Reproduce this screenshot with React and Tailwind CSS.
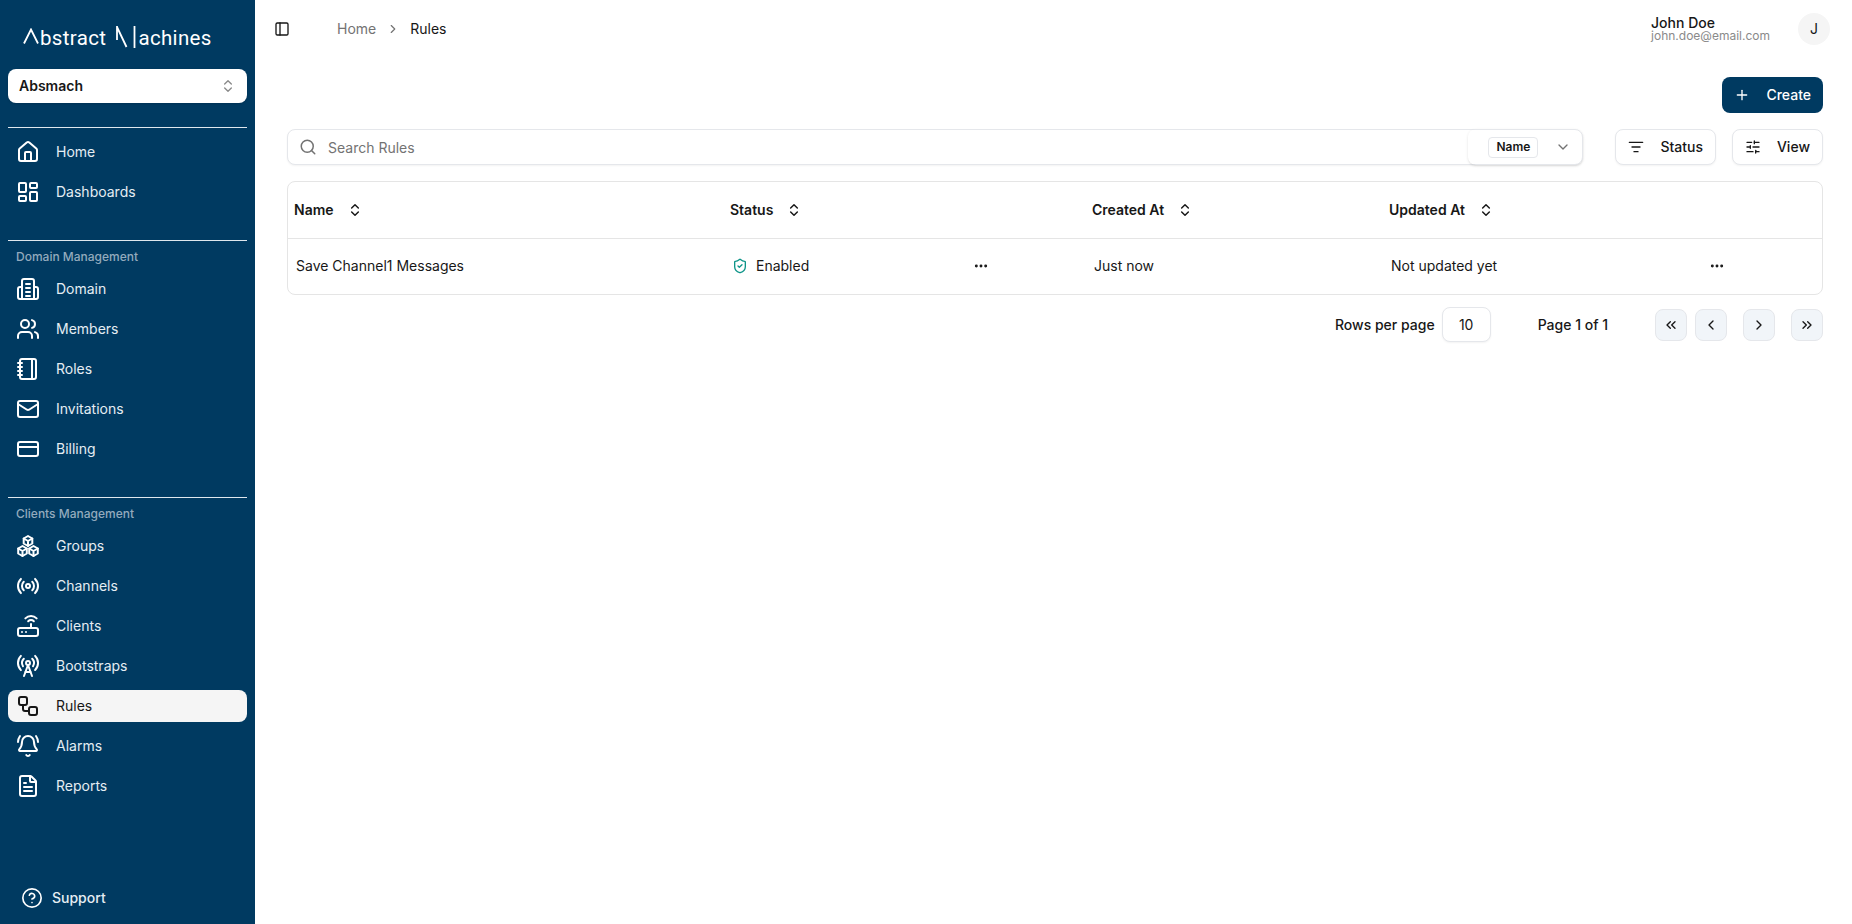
import React from 'react';
import {
  House,
  LayoutDashboard,
  Users,
  Notebook,
  Mail,
  CreditCard,
  Radio,
  Router,
  RadioTower,
  Workflow,
  BellRing,
  FileText,
  CircleHelp,
  ChevronsUpDown,
  ChevronDown,
  ChevronRight,
  ChevronLeft,
  ChevronsLeft,
  ChevronsRight,
  PanelLeft,
  Search,
  Plus,
  SlidersHorizontal,
  ListFilter,
  ShieldCheck,
  Ellipsis,
} from 'lucide-react';

// building with side wings, lucide has nothing close
const DomainIcon = (props) => (
  <svg {...props} viewBox="0 0 24 24" fill="none" stroke="currentColor" strokeWidth="2" strokeLinecap="round" strokeLinejoin="round">
    <path d="M6 22V4a2 2 0 0 1 2-2h8a2 2 0 0 1 2 2v18" />
    <path d="M6 10H4a2 2 0 0 0-2 2v8a2 2 0 0 0 2 2h16a2 2 0 0 0 2-2v-8a2 2 0 0 0-2-2h-2" />
    <path d="M10 7h4M10 11h4M10 15h4M10 19h4" />
  </svg>
);

// three stacked cubes
const cubes = [
  [12, 7],
  [6.5, 17],
  [17.5, 17],
];

const GroupsIcon = (props) => (
  <svg {...props} viewBox="0 0 24 24" fill="none" stroke="currentColor" strokeWidth="2" strokeLinecap="round" strokeLinejoin="round">
    {cubes.map(([x, y]) => (
      <g key={`${x}-${y}`}>
        <path d={`M${x} ${y - 5}l4.3 2.5v5L${x} ${y + 5}l-4.3-2.5v-5z`} />
        <path d={`M${x - 4.3} ${y - 2.5}L${x} ${y}l4.3-2.5M${x} ${y}v5`} />
      </g>
    ))}
  </svg>
);

const Logo = () => (
  <div className="flex items-end h-[24px] pl-[23px] text-white text-[20.5px] leading-[24px] tracking-[0.35px] font-['Roboto',sans-serif]">
    <svg width="16" height="16" viewBox="0 0 16 16" fill="none" stroke="white" strokeWidth="1.8" className="mb-[5px] -translate-y-[1px]">
      <path d="M1 15.5 L8 1.5 L15 15.5" />
    </svg>
    <span className="ml-[1px]">bstract</span>
    <svg width="20" height="22" viewBox="0 0 20 22" fill="none" stroke="white" strokeWidth="1.8" className="ml-[10px] mb-[2px]">
      <path d="M1 0 V14 M1 1 L10.5 21 M18.5 0 V22" />
    </svg>
    <span className="ml-[2px]">achines</span>
  </div>
);

const domainItems = [
  { label: 'Domain', icon: DomainIcon },
  { label: 'Members', icon: Users },
  { label: 'Roles', icon: Notebook },
  { label: 'Invitations', icon: Mail },
  { label: 'Billing', icon: CreditCard },
];

const clientItems = [
  { label: 'Groups', icon: GroupsIcon },
  { label: 'Channels', icon: Radio },
  { label: 'Clients', icon: Router },
  { label: 'Bootstraps', icon: RadioTower },
  { label: 'Rules', icon: Workflow, active: true },
  { label: 'Alarms', icon: BellRing },
  { label: 'Reports', icon: FileText },
];

const NavItem = ({ label, icon: Icon, active }) => (
  <div className={active ? 'flex items-center h-[32px] px-2 gap-4 rounded-lg bg-[#f5f5f5] text-[#171717] text-sm' : 'flex items-center h-[32px] px-2 gap-4 rounded-lg text-[#e5edf3] text-sm'}>
    <Icon className={active ? 'w-[24px] h-[24px] text-[#171717]' : 'w-[24px] h-[24px] text-white'} />
    <span>{label}</span>
  </div>
);

const SortHead = ({ label }) => (
  <div className="flex items-center gap-[13px] font-semibold text-sm text-[#171717]">
    <span>{label}</span>
    <ChevronsUpDown className="w-[16px] h-[16px]" strokeWidth={2.2} />
  </div>
);

const PageButton = ({ icon: Icon }) => (
  <button className="flex items-center justify-center w-[32px] h-[32px] rounded-lg border border-[#e5e7eb] bg-[#f1f5f9] text-[#171717]">
    <Icon className="w-[16px] h-[16px]" />
  </button>
);

const Sidebar = () => (
  <aside className="flex flex-col w-[255px] h-full shrink-0 bg-[#003a61] px-[8px]">
    <div className="-mx-[8px] pt-[26px]">
      <Logo />
    </div>
    <button className="flex items-center justify-between h-[34px] mt-[19px] pl-[11px] pr-[11px] rounded-lg bg-white shadow-sm text-sm font-semibold text-[#171717]">
      <span>Absmach</span>
      <ChevronsUpDown className="w-[16px] h-[16px] text-[#8a8a8a]" />
    </button>
    <div className="h-px mt-[24px] bg-[#dfe7ee]" />
    <nav className="flex flex-col gap-2 pt-2">
      <NavItem label="Home" icon={House} />
      <NavItem label="Dashboards" icon={LayoutDashboard} />
    </nav>
    <div className="h-px mt-[32px] bg-[#dfe7ee]" />
    <div className="flex items-center h-[32px] pl-2 text-xs font-medium text-[#93aabd]">Domain Management</div>
    <nav className="flex flex-col gap-2">
      {domainItems.map((item) => (
        <NavItem key={item.label} {...item} />
      ))}
    </nav>
    <div className="h-px mt-[32px] bg-[#dfe7ee]" />
    <div className="flex items-center h-[32px] pl-2 text-xs font-medium text-[#93aabd]">Clients Management</div>
    <nav className="flex flex-col gap-2">
      {clientItems.map((item) => (
        <NavItem key={item.label} {...item} />
      ))}
    </nav>
    <div className="flex items-center gap-[9px] mt-auto mb-[15px] pl-[13px] text-sm font-medium text-[#e5edf3]">
      <CircleHelp className="w-[22px] h-[22px] text-white" strokeWidth={1.8} />
      <span>Support</span>
    </div>
  </aside>
);

const Topbar = () => (
  <header className="flex items-center h-[58px] pl-[19px] pr-[22px]">
    <PanelLeft className="w-[16px] h-[16px] text-[#171717]" />
    <div className="flex items-center ml-[47px] text-sm">
      <span className="text-[#737373]">Home</span>
      <ChevronRight className="w-[14px] h-[14px] mx-[10px] text-[#737373]" />
      <span className="text-[#171717]">Rules</span>
    </div>
    <div className="ml-auto mr-[28px] leading-none">
      <div className="text-sm leading-[14px] font-medium text-[#171717]">John Doe</div>
      <div className="text-xs leading-[12px] text-[#8a8a8a]">john.doe@email.com</div>
    </div>
    <div className="flex items-center justify-center w-[32px] h-[32px] rounded-full bg-[#f5f5f5] text-sm text-[#171717]">J</div>
  </header>
);

const Toolbar = () => (
  <div className="flex items-center mt-[16px]">
    <div className="flex items-center flex-1 h-[36px] rounded-lg border border-[#e5e7eb] bg-white shadow-xs">
      <Search className="w-[18px] h-[18px] ml-[11px] text-[#737373]" />
      <span className="ml-[11px] text-sm leading-[22px] mt-[1px] text-[#737373]">Search Rules</span>
      <div className="flex items-center h-[36px] w-[115px] ml-auto -mr-px pl-[20px] rounded-lg shadow-sm">
        <span className="flex items-center justify-center w-[50px] h-[21px] rounded border border-[#e5e7eb] text-xs font-semibold text-[#171717]">Name</span>
        <ChevronDown className="w-[16px] h-[16px] ml-[17px] text-[#737373]" />
      </div>
    </div>
    <button className="flex items-center h-[36px] ml-[32px] px-[12px] gap-[16px] rounded-lg border border-[#e5e7eb] bg-white shadow-xs text-sm font-medium text-[#171717]">
      <ListFilter className="w-[16px] h-[16px]" />
      <span>Status</span>
    </button>
    <button className="flex items-center h-[36px] ml-[16px] px-[12px] gap-[16px] rounded-lg border border-[#e5e7eb] bg-white shadow-xs text-sm font-medium text-[#171717]">
      <SlidersHorizontal className="w-[16px] h-[16px]" />
      <span>View</span>
    </button>
  </div>
);

const RulesTable = () => (
  <div className="mt-[16px] rounded-lg border border-[#e5e5e5]">
    <table className="w-full table-fixed text-sm">
      <colgroup>
        <col className="w-[436px]" />
        <col className="w-[362px]" />
        <col className="w-[297px]" />
        <col className="w-[299px]" />
        <col />
      </colgroup>
      <thead>
        <tr className="h-[56px] border-b border-[#e5e5e5] text-left">
          <th className="px-[6px] font-normal"><SortHead label="Name" /></th>
          <th className="px-[6px] font-normal"><SortHead label="Status" /></th>
          <th className="px-[6px] font-normal"><SortHead label="Created At" /></th>
          <th className="px-[6px] font-normal"><SortHead label="Updated At" /></th>
          <th />
        </tr>
      </thead>
      <tbody className="text-[#171717]">
        <tr className="h-[56px]">
          <td className="px-[8px]">Save Channel1 Messages</td>
          <td className="px-[8px]">
            <div className="flex items-center">
              <ShieldCheck className="w-[16px] h-[16px] text-[#0d9488]" />
              <span className="ml-[8px]">Enabled</span>
              <Ellipsis className="w-[16px] h-[16px] ml-[164px]" strokeWidth={2.4} />
            </div>
          </td>
          <td className="px-[8px]">Just now</td>
          <td className="px-[8px]">Not updated yet</td>
          <td className="px-[8px]">
            <Ellipsis className="w-[16px] h-[16px] ml-[19px]" strokeWidth={2.4} />
          </td>
        </tr>
      </tbody>
    </table>
  </div>
);

const Pagination = () => (
  <div className="flex items-center justify-end mt-[12px] text-sm font-medium text-[#171717]">
    <span>Rows per page</span>
    <div className="flex items-center justify-center w-[49px] h-[35px] ml-[7px] rounded-lg border border-[#e5e7eb] bg-white shadow-xs font-normal">10</div>
    <span className="ml-[47px] mr-[47px]">Page 1 of 1</span>
    <div className="flex items-center">
      <PageButton icon={ChevronsLeft} />
      <div className="w-[8px]" />
      <PageButton icon={ChevronLeft} />
      <div className="w-[16px]" />
      <PageButton icon={ChevronRight} />
      <div className="w-[16px]" />
      <PageButton icon={ChevronsRight} />
    </div>
  </div>
);

const App = () => (
  <div className="flex w-full h-screen overflow-hidden bg-white font-['Inter',sans-serif]">
    <Sidebar />
    <main className="flex flex-col flex-1 min-w-0">
      <Topbar />
      <div className="flex flex-col flex-1 pt-[19px] pl-[32px] pr-[29px]">
        <div className="flex justify-end">
          <button className="flex items-center h-[36px] px-[12px] gap-[16px] rounded-lg bg-[#003a61] text-sm font-medium text-white">
            <Plus className="w-[16px] h-[16px]" />
            <span>Create</span>
          </button>
        </div>
        <Toolbar />
        <RulesTable />
        <Pagination />
      </div>
    </main>
  </div>
);

export default App;
